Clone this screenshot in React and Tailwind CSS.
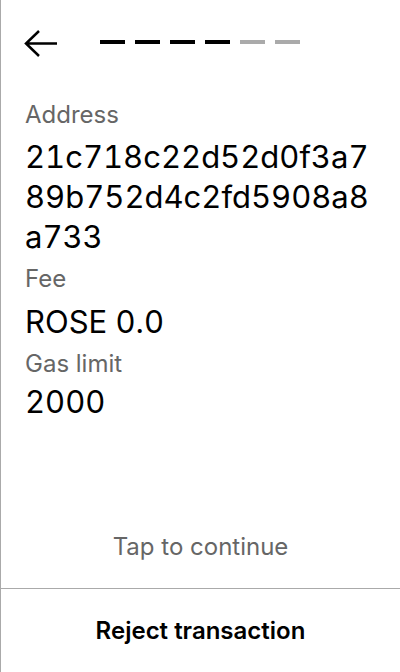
import React from "react";

const steps = [true, true, true, true, false, false];

const fields = [
  { label: "Address", value: "21c718c22d52d0f3a789b752d4c2fd5908a8a733", gap: "mt-2", top: "mt-0" },
  { label: "Fee", value: "ROSE 0.0", gap: "mt-[9px]", top: "mt-2" },
  { label: "Gas limit", value: "2000", gap: "mt-1", top: "mt-2" },
];

const Field = ({ label, value, gap, top }) => (
  <div className={`flex flex-col ${top}`}>
    <div className="text-[24px] leading-[28px] text-[#666666]">{label}</div>
    <div className={`${gap} break-all text-[31px] leading-[40px] tabular-nums text-black`}>
      {value}
    </div>
  </div>
);

export default function App() {
  return (
    <div
      className="flex h-[672px] w-[400px] flex-col border-l border-[#aaaaaa] bg-white"
      style={{ fontFamily: "Inter, 'Noto Sans', sans-serif" }}
    >
      {/* header */}
      <div className="flex items-start pl-[23px] pt-[30px]">
        <svg width="34" height="27" viewBox="0 0 34 27" fill="none">
          <path
            d="M33 13.5H2M15 1L2 13.5L15 26"
            stroke="black"
            strokeWidth="2.5"
          />
        </svg>
        <div className="ml-[42px] mt-[10px] flex gap-[10px]">
          {steps.map((done, i) => (
            <div
              key={i}
              className={`h-1 w-[25px] ${done ? "bg-black" : "bg-[#aaaaaa]"}`}
            />
          ))}
        </div>
      </div>

      {/* details */}
      <div className="mt-[44px] flex flex-col px-6">
        {fields.map((f) => (
          <Field key={f.label} {...f} />
        ))}
      </div>

      <div className="flex-1" />

      <div className="mb-[25px] text-center text-[24px] leading-[32px] text-[#666666]">
        Tap to continue
      </div>
      <div className="flex h-[84px] items-center justify-center border-t border-[#aaaaaa]">
        <span className="text-[24px] font-semibold text-black">Reject transaction</span>
      </div>
    </div>
  );
}
